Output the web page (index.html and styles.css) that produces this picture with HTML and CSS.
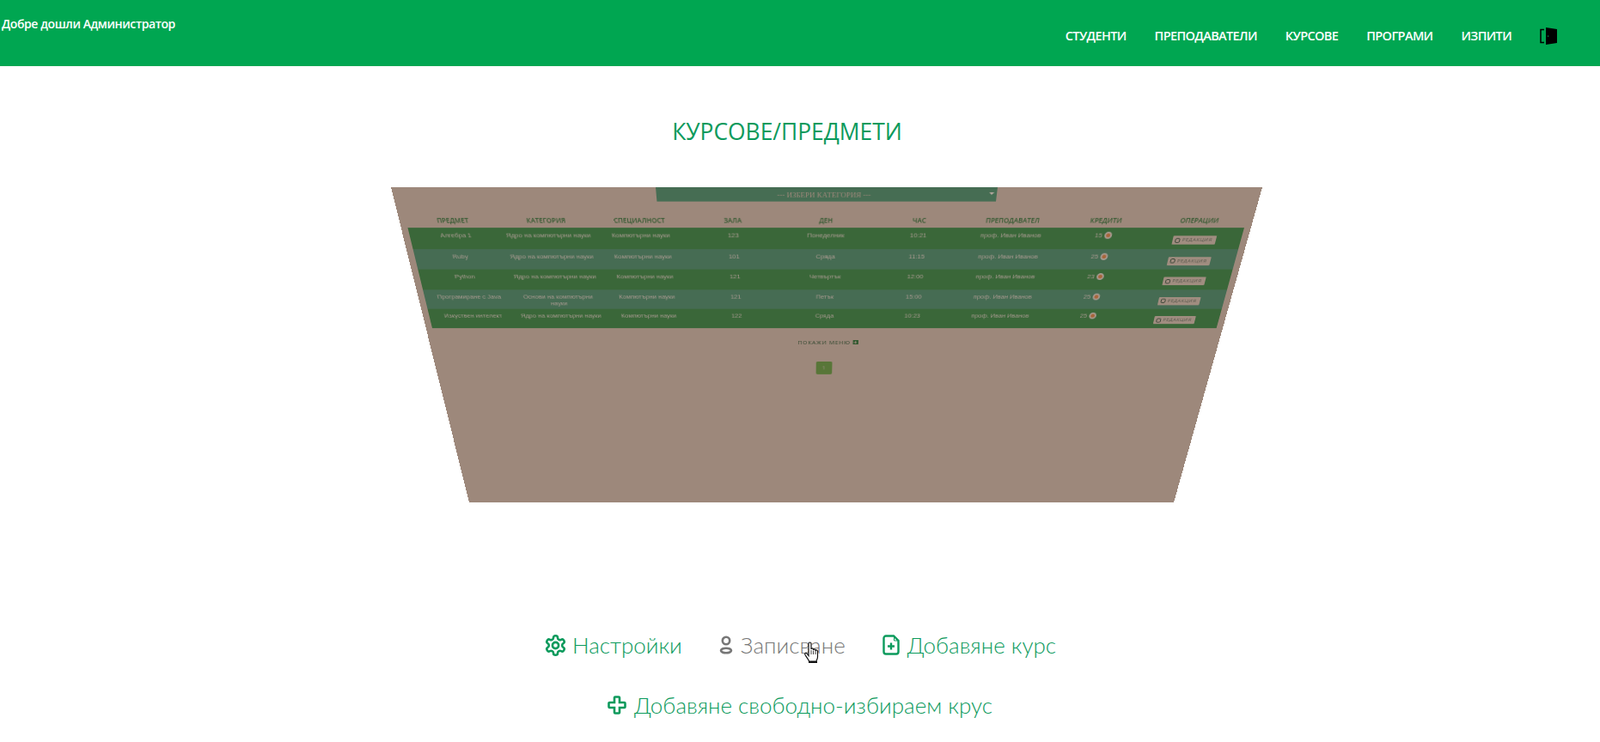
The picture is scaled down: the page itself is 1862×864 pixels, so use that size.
FILE: index.html
```html
<!DOCTYPE html>
<html lang="bg">

<head>
    <meta charset="UTF-8">
    <meta name="viewport" content="width=device-width, initial-scale=1.0">
    <title>Курсове</title>
    <link rel="stylesheet" href="styles.css">
</head>

<body>

    <header class="topbar">
        <div class="welcome">Добре дошли Администратор</div>
        <nav class="topnav">
            <a href="#">СТУДЕНТИ</a>
            <a href="#">ПРЕПОДАВАТЕЛИ</a>
            <a href="#">КУРСОВЕ</a>
            <a href="#">ПРОГРАМИ</a>
            <a href="#">ИЗПИТИ</a>
            <a href="#" class="door">
                <svg width="20" height="20" viewBox="0 0 20 20">
                    <path d="M5 2.500H1v15h4" fill="none" stroke="#000" stroke-width="1.500"/>
                    <path d="M7 0l13 2v16L7 20z" fill="#000"/>
                    <rect x="9" y="9.500" width="1.200" height="1.200" fill="#00a651"/>
                </svg>
            </a>
        </nav>
    </header>

    <h1 class="pagetitle">КУРСОВЕ/ПРЕДМЕТИ</h1>

    <div class="panel">
        <div class="category">--- ИЗБЕРИ КАТЕГОРИЯ ---<span class="caret"></span></div>

        <table class="courses">
            <thead>
                <tr>
                    <th>ПРЕДМЕТ</th>
                    <th>КАТЕГОРИЯ</th>
                    <th>СПЕЦИАЛНОСТ</th>
                    <th>ЗАЛА</th>
                    <th>ДЕН</th>
                    <th>ЧАС</th>
                    <th>ПРЕПОДАВАТЕЛ</th>
                    <th>КРЕДИТИ</th>
                    <th>ОПЕРАЦИИ</th>
                </tr>
            </thead>
            <tbody>
                <tr>
                    <td>Алгебра 1</td>
                    <td>Ядро на компютърни науки</td>
                    <td>Компютърни науки</td>
                    <td>123</td>
                    <td>Понеделник</td>
                    <td>10:21</td>
                    <td>проф. Иван Иванов</td>
                    <td>15 <span class="info"></span></td>
                    <td><a href="#" class="edit"><span class="pen"></span>РЕДАКЦИЯ</a></td>
                </tr>
                <tr>
                    <td>Ruby</td>
                    <td>Ядро на компютърни науки</td>
                    <td>Компютърни науки</td>
                    <td>101</td>
                    <td>Сряда</td>
                    <td>11:15</td>
                    <td>проф. Иван Иванов</td>
                    <td>25 <span class="info"></span></td>
                    <td><a href="#" class="edit"><span class="pen"></span>РЕДАКЦИЯ</a></td>
                </tr>
                <tr>
                    <td>Python</td>
                    <td>Ядро на компютърни науки</td>
                    <td>Компютърни науки</td>
                    <td>121</td>
                    <td>Четвъртък</td>
                    <td>12:00</td>
                    <td>проф. Иван Иванов</td>
                    <td>23 <span class="info"></span></td>
                    <td><a href="#" class="edit"><span class="pen"></span>РЕДАКЦИЯ</a></td>
                </tr>
                <tr>
                    <td>Програмиране с Java</td>
                    <td>Основи на компютърни науки</td>
                    <td>Компютърни науки</td>
                    <td>121</td>
                    <td>Петък</td>
                    <td>15:00</td>
                    <td>проф. Иван Иванов</td>
                    <td>25 <span class="info"></span></td>
                    <td><a href="#" class="edit"><span class="pen"></span>РЕДАКЦИЯ</a></td>
                </tr>
                <tr>
                    <td>Изкуствен интелект</td>
                    <td>Ядро на компютърни науки</td>
                    <td>Компютърни науки</td>
                    <td>122</td>
                    <td>Сряда</td>
                    <td>10:23</td>
                    <td>проф. Иван Иванов</td>
                    <td>25 <span class="info"></span></td>
                    <td><a href="#" class="edit"><span class="pen"></span>РЕДАКЦИЯ</a></td>
                </tr>
            </tbody>
        </table>

        <div class="showmenu">ПОКАЖИ МЕНЮ <span class="plusbox"></span></div>
        <div class="pager"><span>1</span></div>
    </div>

    <div class="actions">
        <div class="actionrow">
            <a href="#" class="action">
                <svg class="gear" width="27" height="27" viewBox="0 0 24 24" fill="none" stroke="currentColor" stroke-width="2.300">
                    <path d="M12.22 2h-.44a2 2 0 0 0-2 2v.18a2 2 0 0 1-1 1.73l-.43.25a2 2 0 0 1-2 0l-.15-.08a2 2 0 0 0-2.73.73l-.22.38a2 2 0 0 0 .73 2.73l.15.1a2 2 0 0 1 1 1.72v.51a2 2 0 0 1-1 1.74l-.15.09a2 2 0 0 0-.73 2.73l.22.38a2 2 0 0 0 2.73.73l.15-.08a2 2 0 0 1 2 0l.43.25a2 2 0 0 1 1 1.73V20a2 2 0 0 0 2 2h.44a2 2 0 0 0 2-2v-.18a2 2 0 0 1 1-1.73l.43-.25a2 2 0 0 1 2 0l.15.08a2 2 0 0 0 2.73-.73l.22-.39a2 2 0 0 0-.73-2.73l-.15-.08a2 2 0 0 1-1-1.74v-.5a2 2 0 0 1 1-1.74l.15-.09a2 2 0 0 0 .73-2.73l-.22-.38a2 2 0 0 0-2.73-.73l-.15.08a2 2 0 0 1-2 0l-.43-.25a2 2 0 0 1-1-1.73V4a2 2 0 0 0-2-2z"/>
                    <circle cx="12" cy="12" r="3.200"/>
                </svg>
                Настройки
            </a>
            <a href="#" class="action hovered">
                <svg width="16" height="22" viewBox="0 0 16 22" fill="none" stroke="currentColor" stroke-width="2.600">
                    <circle cx="8" cy="6" r="4.200"/>
                    <ellipse cx="8" cy="17.500" rx="6" ry="2.800"/>
                </svg>
                Записване
            </a>
            <a href="#" class="action">
                <svg width="20" height="24" viewBox="0 0 20 24" fill="none" stroke="currentColor" stroke-width="2.400">
                    <path d="M13 1.500H4a2.500 2.500 0 0 0-2.500 2.500v16A2.500 2.500 0 0 0 4 22.500h12a2.500 2.500 0 0 0 2.500-2.500V7z"/>
                    <path d="M10 9.500v8M6 13.500h8"/>
                    <path d="M13.500 3v4h4" stroke-width="1"/>
                </svg>
                Добавяне курс
            </a>
        </div>
        <div class="actionrow">
            <a href="#" class="action">
                <svg width="22" height="22" viewBox="0 0 22 22" fill="none" stroke="currentColor" stroke-width="2.600">
                    <path d="M8 2.500a1 1 0 0 1 1-1h4a1 1 0 0 1 1 1V8h5.500a1 1 0 0 1 1 1v4a1 1 0 0 1-1 1H14v5.500a1 1 0 0 1-1 1H9a1 1 0 0 1-1-1V14H2.500a1 1 0 0 1-1-1V9a1 1 0 0 1 1-1H8z"/>
                </svg>
                Добавяне свободно-избираем крус
            </a>
        </div>
    </div>

    <!-- pointer from the screenshot -->
    <svg class="hand" width="20" height="26" viewBox="0 0 20 26">
        <path d="M6 2.500c0-2 3-2 3 0V9c0-1.500 2.500-1.500 2.500 0v1c0-1.500 2.500-1.500 2.500 0v1c0-1.500 2.500-1.500 2.500 .5V18c0 2-1 3-1.500 5H6.500C6 21 4 19 2 15.500c-1-2 1-3 2-1.500l2 2.500z" fill="#fff" stroke="#111" stroke-width="1.200"/>
        <path d="M9 10v5M11.500 10.500V15M14 11v4" stroke="#111" stroke-width=".8"/>
        <rect x="6" y="23" width="10" height="2" fill="#111"/>
    </svg>

</body>

</html>
```

FILE: styles.css
```css
body {
    margin: 0;
    background-color: #fff;
    font-family: "Open Sans", sans-serif;
    overflow: hidden;
}

a {
    text-decoration: none;
    color: inherit;
}

.topbar {
    height: 77px;
    background-color: #00a651;
    color: #fff;
    display: flex;
    justify-content: space-between;
    box-sizing: border-box;
    padding-right: 50px;
}

.welcome {
    font-size: 14px;
    font-weight: 600;
    letter-spacing: -0.4px;
    padding: 18px 0 0 2px;
}

.topnav {
    display: flex;
    align-items: center;
    gap: 33px;
    font-size: 14.500px;
    font-weight: 600;
    letter-spacing: -0.62px;
    height: 83px;
}

.door {
    display: flex;
}

.pagetitle {
    margin: 57px 30px 0 0;
    height: 84px;
    text-align: center;
    font-size: 26.400px;
    line-height: 38px;
    font-weight: 400;
    color: #0b9a5c;
}

/* corners measured off the screenshot, the flat box is 1014 x 460 */
.panel {
    width: 1014px;
    height: 460px;
    margin: 0 auto;
    background-color: #9d887b;
    transform-origin: 0 0;
    transform: matrix3d(1, 0, 0, 0, 0.26057, 0.98659, 0, 0.0005143, 0, 0, 1, 0, 31, 0, 0, 1);
}

.category {
    width: 398px;
    height: 17px;
    margin: 0 auto;
    padding-right: 6px;
    box-sizing: border-box;
    background-color: #466d53;
    color: #9d887b;
    font-family: "Liberation Serif", serif;
    font-size: 9px;
    line-height: 18px;
    text-align: center;
    position: relative;
}

.caret {
    position: absolute;
    right: 3px;
    top: 6px;
    border-left: 3px solid transparent;
    border-right: 3px solid transparent;
    border-top: 3px solid #b5a89f;
}

.courses {
    width: 998px;
    margin: 13px 8px 0;
    table-layout: fixed;
    border-collapse: collapse;
    font-family: "Liberation Sans", sans-serif;
    font-size: 8px;
    text-align: center;
}

.courses th {
    height: 18px;
    padding: 0 0 1px;
    font-family: "Open Sans", sans-serif;
    font-size: 8px;
    font-weight: 600;
    color: #31582f;
    vertical-align: middle;
}

.courses td {
    height: 26.600px;
    box-sizing: border-box;
    padding: 5px 2px 0;
    line-height: 9px;
    color: #a89a90;
    vertical-align: top;
}

.courses tbody tr {
    background-color: #3a6739;
}

.courses tbody tr:nth-child(even) {
    background-color: #466c53;
}

.info {
    display: inline-block;
    width: 9px;
    height: 9px;
    border-radius: 50%;
    vertical-align: -2px;
    background-color: #a8653a;
    border: 2px solid #a89a90;
    box-sizing: border-box;
}

.edit {
    display: inline-flex;
    align-items: center;
    gap: 2px;
    width: 52px;
    height: 11px;
    margin-top: 5px;
    margin-right: 2px;
    justify-content: center;
    background-color: #a08d80;
    color: #55564a;
    font-family: "Open Sans", sans-serif;
    font-size: 6px;
    letter-spacing: 0.6px;
    border-radius: 1px;
}

.pen {
    width: 4px;
    height: 4px;
    border: 1px solid #3a4436;
    border-radius: 2px;
}

.showmenu {
    margin: 16px 0 0;
    padding-left: 10px;
    text-align: center;
    color: #31472f;
    font-size: 7.500px;
    letter-spacing: 0.8px;
    line-height: 9px;
}

.plusbox {
    display: inline-block;
    width: 7px;
    height: 6px;
    background:
        linear-gradient(#9d887b, #9d887b) center / 4px 1px no-repeat,
        linear-gradient(#9d887b, #9d887b) center / 1px 4px no-repeat,
        #31582f;
    vertical-align: -0.500px;
}

.pager {
    width: 21px;
    height: 19px;
    margin: 23px auto 0;
    background-color: #587638;
    border-radius: 2px;
    color: #a3938a;
    font-size: 7px;
    line-height: 19px;
    text-align: center;
}

.actions {
    margin-top: 53px;
    display: flex;
    flex-direction: column;
    gap: 30px;
    font-family: "Lato", sans-serif;
    font-weight: 300;
    font-size: 26px;
    color: #0b9a5c;
}

.actionrow {
    display: flex;
    justify-content: center;
    gap: 43px;
    height: 40px;
}

.action {
    display: flex;
    align-items: center;
    gap: 9px;
}

.gear {
    margin-right: -3px;
}

.hovered {
    color: #777;
}

.hand {
    position: absolute;
    left: 935px;
    top: 747px;
}
```
